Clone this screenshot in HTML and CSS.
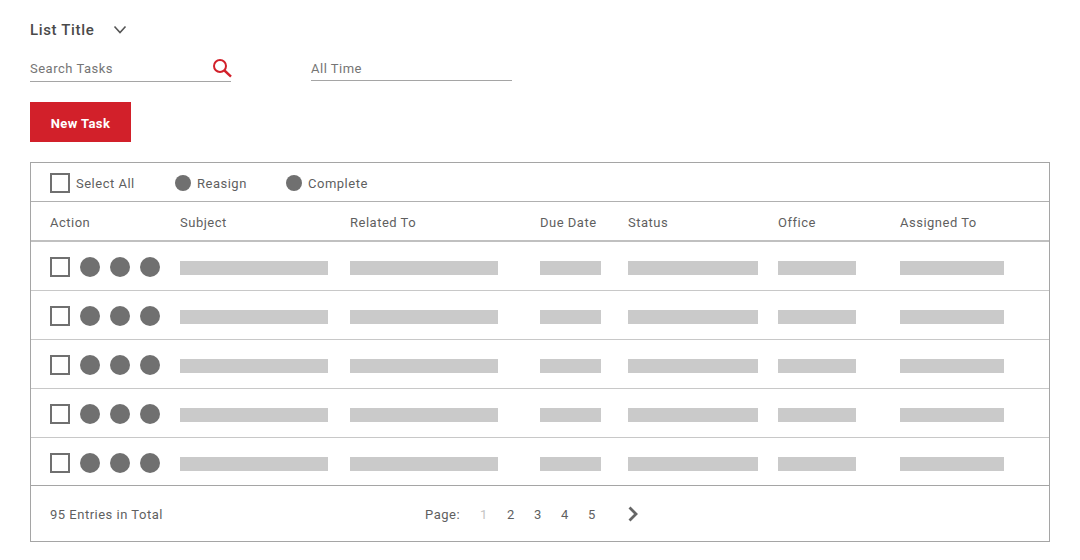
FILE: index.html
```html
<!DOCTYPE html>
<html lang="en">
<head>
<meta charset="utf-8">
<title>List Title</title>
<link rel="stylesheet" href="styles.css">
</head>
<body>
<main class="page">
  <div class="title-row">
    <h1 class="title">List Title</h1>
    <svg class="chev" width="14" height="10" viewBox="0 0 14 10"><path d="M1.500 1.500 7 7.500l5.500-6" fill="none" stroke="#555" stroke-width="1.600"/></svg>
  </div>
  <div class="filters">
    <div class="field field-search">
      <span>Search Tasks</span>
      <svg width="20" height="20" viewBox="0 0 20 20"><circle cx="8" cy="8" r="6" fill="none" stroke="#d2202a" stroke-width="2"/><path d="M12.500 12.500 19 18.600" fill="none" stroke="#d2202a" stroke-width="2.400"/></svg>
    </div>
    <div class="field field-time"><span>All Time</span></div>
  </div>
  <button class="new-task">New Task</button>
  <section class="table">
    <div class="toolbar">
      <span class="check"></span><span class="tool-label tl-select">Select All</span>
      <span class="dot-sm"></span><span class="tool-label tl-reasign">Reasign</span>
      <span class="dot-sm"></span><span class="tool-label">Complete</span>
    </div>
    <div class="grid head">
      <span>Action</span><span>Subject</span><span>Related To</span><span>Due Date</span><span>Status</span><span>Office</span><span>Assigned To</span>
    </div>
    <div class="grid row">
      <div class="actions"><span class="check"></span><span class="dot"></span><span class="dot"></span><span class="dot"></span></div>
      <i class="bar b1"></i><i class="bar b2"></i><i class="bar b3"></i><i class="bar b4"></i><i class="bar b5"></i><i class="bar b6"></i>
    </div>
    <div class="grid row">
      <div class="actions"><span class="check"></span><span class="dot"></span><span class="dot"></span><span class="dot"></span></div>
      <i class="bar b1"></i><i class="bar b2"></i><i class="bar b3"></i><i class="bar b4"></i><i class="bar b5"></i><i class="bar b6"></i>
    </div>
    <div class="grid row">
      <div class="actions"><span class="check"></span><span class="dot"></span><span class="dot"></span><span class="dot"></span></div>
      <i class="bar b1"></i><i class="bar b2"></i><i class="bar b3"></i><i class="bar b4"></i><i class="bar b5"></i><i class="bar b6"></i>
    </div>
    <div class="grid row">
      <div class="actions"><span class="check"></span><span class="dot"></span><span class="dot"></span><span class="dot"></span></div>
      <i class="bar b1"></i><i class="bar b2"></i><i class="bar b3"></i><i class="bar b4"></i><i class="bar b5"></i><i class="bar b6"></i>
    </div>
    <div class="grid row last">
      <div class="actions"><span class="check"></span><span class="dot"></span><span class="dot"></span><span class="dot"></span></div>
      <i class="bar b1"></i><i class="bar b2"></i><i class="bar b3"></i><i class="bar b4"></i><i class="bar b5"></i><i class="bar b6"></i>
    </div>
    <div class="footer">
      <span class="total">95 Entries in Total</span>
      <span class="page-label">Page:</span>
      <span class="pg off">1</span><span class="pg">2</span><span class="pg">3</span><span class="pg">4</span><span class="pg">5</span>
      <svg class="next" width="12" height="16" viewBox="0 0 12 16"><path d="M2.500 1.500 9 8l-6.500 6.500" fill="none" stroke="#666" stroke-width="2.800"/></svg>
    </div>
  </section>
</main>
</body>
</html>
```

FILE: styles.css
```css
* { box-sizing: border-box; }
html, body { margin: 0; padding: 0; background: #fff; }
body { font-family: Roboto, "Liberation Sans", sans-serif; color: #5f5f5f; font-size: 13px; letter-spacing: 0.5px; }
.page { width: 1080px; height: 560px; padding: 20px 30px 0; overflow: hidden; }
.title-row { display: flex; align-items: center; height: 20px; }
.title { margin: 0; width: 83px; font-size: 15px; font-weight: 500; color: #4a4a4a; line-height: 20px; letter-spacing: 0.65px; }
.chev { display: block; }
.filters { display: flex; gap: 80px; margin-top: 17px; }
.field { width: 201px; display: flex; align-items: center; justify-content: space-between; color: #757575; }
.field-search { height: 25px; padding-bottom: 2px; border-bottom: 1px solid #a5a5a5; }
.field-time { height: 24px; padding-bottom: 1px; border-bottom: 1px solid #a5a5a5; }
.field svg { display: block; margin-right: -1px; }
.new-task { display: block; margin: 20px 0 0; width: 101px; height: 40px; padding: 2px 0 0; border: 0; border-radius: 0; background: #d2202a; color: #fff; font: 700 13px Roboto, sans-serif; letter-spacing: 0.4px; }
.table { margin-top: 20px; width: 1020px; height: 380px; border: 1px solid #a5a5a5; }
.toolbar { display: flex; align-items: center; height: 39px; padding: 2px 0 0 19px; border-bottom: 1px solid #b0b0b0; }
.check { width: 20px; height: 20px; border: 2px solid #707070; flex: none; }
.tool-label { margin-left: 6px; }
.tl-select { width: 99px; }
.tl-reasign { width: 89px; }
.dot-sm { width: 16px; height: 16px; border-radius: 50%; background: #707070; flex: none; }
.grid { display: grid; grid-template-columns: 130px 170px 190px 88px 150px 122px 1fr; align-items: center; padding-left: 19px; }
.head { height: 40px; padding-top: 2px; border-bottom: 2px solid #c0c0c0; }
.row { height: 49px; padding-top: 1px; border-bottom: 1px solid #c8c8c8; }
.row.last { height: 48px; padding-top: 2px; border-bottom: 1px solid #a5a5a5; }
.actions { display: flex; gap: 10px; }
.dot { width: 20px; height: 20px; border-radius: 50%; background: #707070; flex: none; }
.bar { display: block; height: 14px; margin-top: 2px; background: #cacaca; }
.b1, .b2 { width: 148px; }
.b3 { width: 61px; }
.b4 { width: 130px; }
.b5 { width: 78px; }
.b6 { width: 104px; }
.footer { display: flex; align-items: center; height: 56px; padding-left: 19px; color: #5f5f5f; }
.total { width: 375px; }
.page-label { width: 55px; }
.pg { width: 27px; }
.pg.off { color: #c4c4c4; }
.next { display: block; margin-left: 12px; }
```
